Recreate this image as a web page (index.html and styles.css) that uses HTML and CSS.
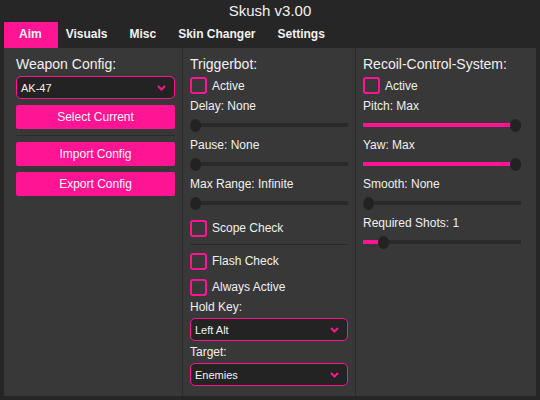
FILE: index.html
```html
<!DOCTYPE html>
<html lang="en">
<head>
<meta charset="utf-8">
<title>Skush v3.00</title>
<link rel="stylesheet" href="styles.css">
</head>
<body>
<div class="window">
  <div class="title">Skush v3.00</div>
  <nav class="tabs">
    <span class="tab tab-active">Aim</span>
    <span class="tab">Visuals</span>
    <span class="tab">Misc</span>
    <span class="tab">Skin Changer</span>
    <span class="tab">Settings</span>
  </nav>
  <main class="panel">
    <section class="col col-left">
      <div class="heading">Weapon Config:</div>
      <div class="select select-first">
        <span>AK-47</span>
        <svg class="chev" width="9" height="6" viewBox="0 0 9 6"><polyline points="1,1 4.5,4.5 8,1" fill="none" stroke="#ff1493" stroke-width="2"/></svg>
      </div>
      <button class="btn btn-first">Select Current</button>
      <div class="sep sep-left"></div>
      <button class="btn">Import Config</button>
      <button class="btn btn-next">Export Config</button>
    </section>

    <section class="col col-mid">
      <div class="heading">Triggerbot:</div>
      <div class="check"><span class="box"></span><span>Active</span></div>
      <div class="label">Delay: None</div>
      <div class="slider" style="--v:0"><div class="track"><div class="fill"></div></div><span class="knob"></span></div>
      <div class="label">Pause: None</div>
      <div class="slider" style="--v:0"><div class="track"><div class="fill"></div></div><span class="knob"></span></div>
      <div class="label">Max Range: Infinite</div>
      <div class="slider" style="--v:0"><div class="track"><div class="fill"></div></div><span class="knob"></span></div>
      <div class="check check-after-slider"><span class="box"></span><span>Scope Check</span></div>
      <div class="sep sep-mid"></div>
      <div class="check"><span class="box"></span><span>Flash Check</span></div>
      <div class="check check-next"><span class="box"></span><span>Always Active</span></div>
      <div class="label label-field">Hold Key:</div>
      <div class="select select-field">
        <span>Left Alt</span>
        <svg class="chev" width="9" height="6" viewBox="0 0 9 6"><polyline points="1,1 4.5,4.5 8,1" fill="none" stroke="#ff1493" stroke-width="2"/></svg>
      </div>
      <div class="label label-field2">Target:</div>
      <div class="select select-field">
        <span>Enemies</span>
        <svg class="chev" width="9" height="6" viewBox="0 0 9 6"><polyline points="1,1 4.5,4.5 8,1" fill="none" stroke="#ff1493" stroke-width="2"/></svg>
      </div>
    </section>

    <section class="col col-right">
      <div class="heading">Recoil-Control-System:</div>
      <div class="check"><span class="box"></span><span>Active</span></div>
      <div class="label">Pitch: Max</div>
      <div class="slider" style="--v:1"><div class="track"><div class="fill"></div></div><span class="knob"></span></div>
      <div class="label">Yaw: Max</div>
      <div class="slider" style="--v:1"><div class="track"><div class="fill"></div></div><span class="knob"></span></div>
      <div class="label">Smooth: None</div>
      <div class="slider" style="--v:0"><div class="track"><div class="fill"></div></div><span class="knob"></span></div>
      <div class="label">Required Shots: 1</div>
      <div class="slider" style="--v:0.1"><div class="track"><div class="fill"></div></div><span class="knob"></span></div>
    </section>
  </main>
</div>
</body>
</html>
```

FILE: styles.css
```css
* { box-sizing: border-box; }

html, body {
  margin: 0;
  padding: 0;
  background: #262626;
}

body {
  width: 540px;
  height: 400px;
  overflow: hidden;
  font-family: "Liberation Sans", Arial, sans-serif;
  color: #f0f0f0;
}

.window {
  width: 540px;
  height: 400px;
  background: #262626;
}

.title {
  height: 22px;
  line-height: 22px;
  text-align: center;
  font-size: 15px;
  color: #f2f2f2;
}

.tabs {
  display: flex;
  height: 26px;
  padding-left: 4px;
}

.tab {
  height: 26px;
  line-height: 24px;
  font-size: 12px;
  font-weight: bold;
  padding: 0 14px 0 8px;
  color: #f2f2f2;
}

.tab-active {
  background: #ff1493;
  padding: 0 16px 0 15px;
}

.panel {
  display: flex;
  margin: 0 4px;
  height: 348px;
  background: #383838;
}

.col {
  padding-top: 8px;
  display: flex;
  flex-direction: column;
}

.col-left {
  width: 178px;
  padding-left: 12px;
  padding-right: 7px;
}

.col-mid {
  width: 173px;
  border-left: 1px solid #2b2b2b;
  padding-left: 7px;
  padding-right: 7px;
}

.col-right {
  flex: 1;
  border-left: 1px solid #2b2b2b;
  padding-left: 7px;
  padding-right: 15px;
}

.heading {
  font-size: 14px;
  line-height: 16px;
  height: 16px;
  white-space: nowrap;
}

.select {
  display: flex;
  align-items: center;
  justify-content: space-between;
  height: 23px;
  border: 1px solid #ff1493;
  border-radius: 5px;
  background: #232323;
  padding: 0 8px 0 4px;
  font-size: 11px;
  color: #f2f2f2;
}

.select-first { margin-top: 4px; }
.select-field { margin-top: 4px; }

.chev { display: block; }

.btn {
  display: block;
  width: 100%;
  height: 24px;
  border: 0;
  border-radius: 2px;
  background: #ff1493;
  color: #f6f6f6;
  font-family: "Liberation Sans", Arial, sans-serif;
  font-size: 12px;
  line-height: 24px;
  padding: 0;
}

.btn-first { margin-top: 6px; }
.btn-next { margin-top: 6px; }

.sep {
  height: 1px;
  background: #2a2a2a;
  flex: none;
}

.sep-left { margin: 6px 0; }
.sep-mid { margin: 7.5px 0 7.5px; }

.check {
  display: flex;
  align-items: center;
  gap: 5px;
  height: 17px;
  font-size: 12px;
  margin-top: 5px;
  flex: none;
}

.check-after-slider { margin-top: 4px; }
.sep + .check { margin-top: 0; }
.check-next { margin-top: 9px; }

.box {
  width: 17px;
  height: 17px;
  border: 2px solid #ff1493;
  border-radius: 3px;
  flex: none;
}

.label {
  font-size: 12px;
  line-height: 14px;
  height: 14px;
  margin-top: 0;
  white-space: nowrap;
  flex: none;
}

.check + .label { margin-top: 4.5px; }
.label-field { margin-top: 4.5px; }
.label-field2 { margin-top: 4px; }

.slider {
  position: relative;
  height: 25px;
  display: flex;
  align-items: center;
  flex: none;
}

.track {
  width: 100%;
  height: 4px;
  background: #2a2a2a;
  position: relative;
}

.fill {
  height: 4px;
  background: #ff1493;
  width: calc(var(--v) * (100% - 11px) + 5.5px);
}

.knob {
  position: absolute;
  top: 6px;
  left: calc(var(--v) * (100% - 11px));
  width: 11px;
  height: 13px;
  border-radius: 50%;
  background: #222222;
}
```
